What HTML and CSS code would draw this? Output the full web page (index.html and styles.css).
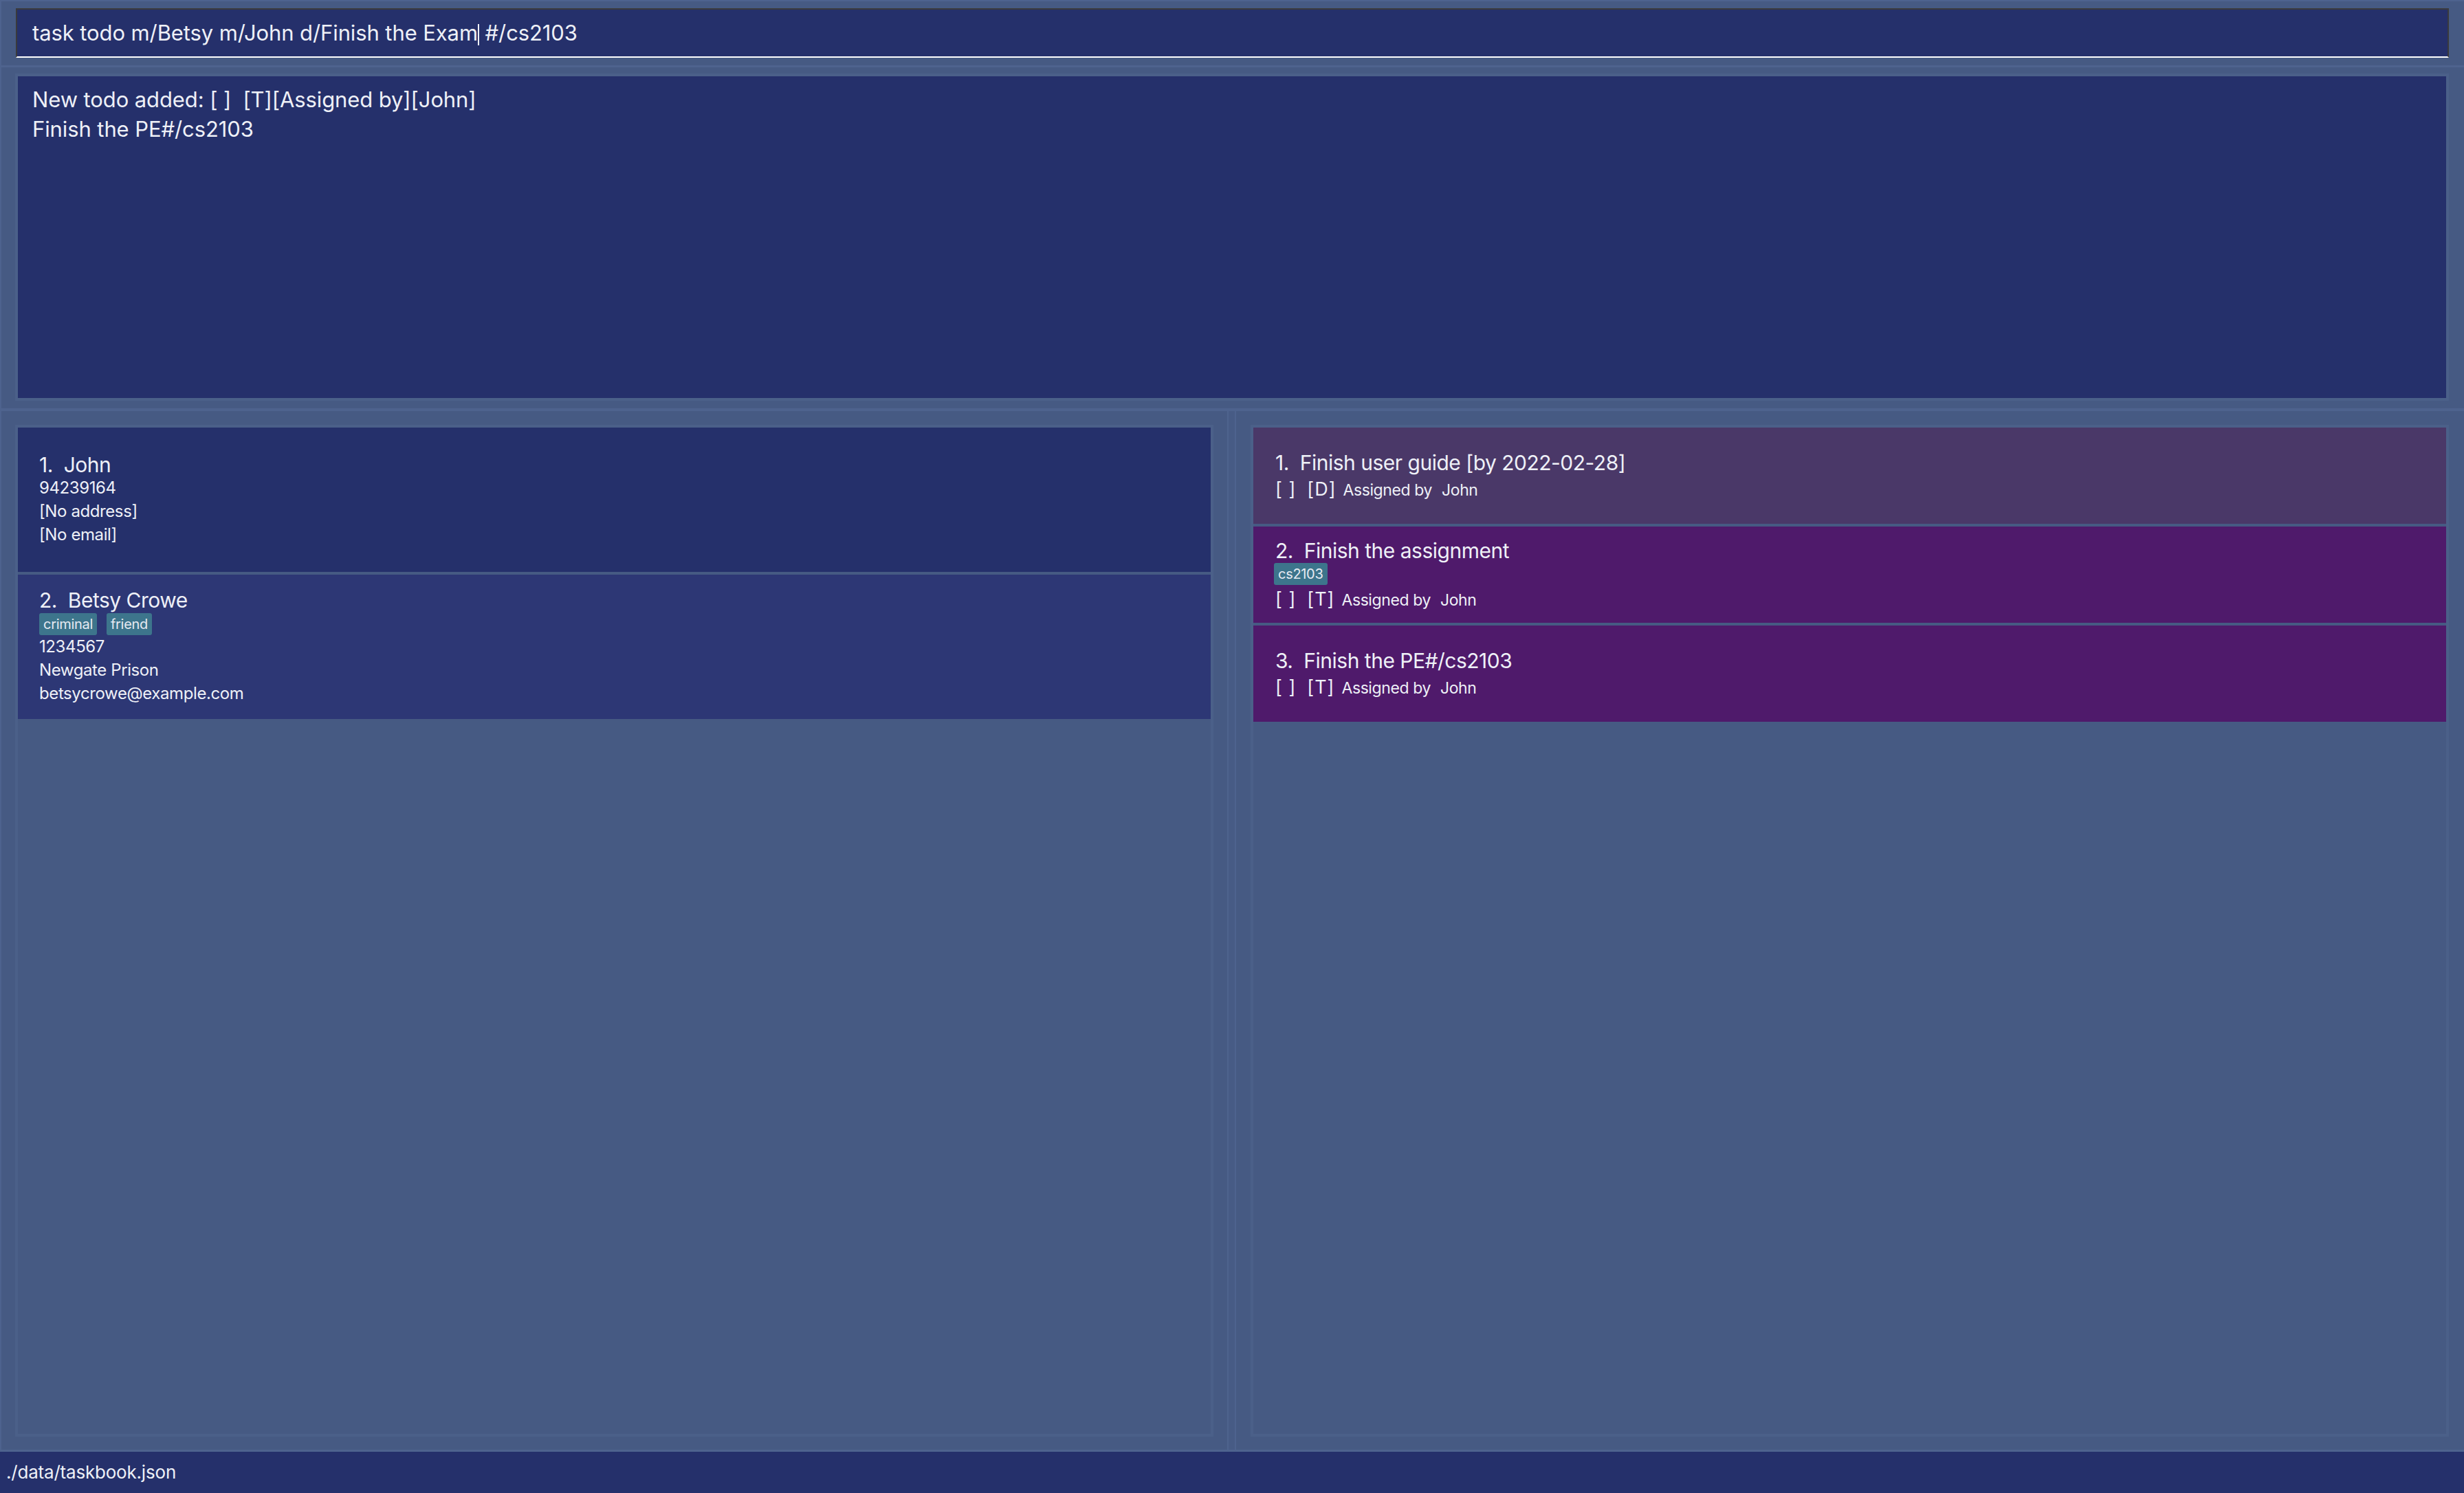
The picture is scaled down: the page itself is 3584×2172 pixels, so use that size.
FILE: index.html
```html
<!DOCTYPE html>
<html lang="en">
<head>
<meta charset="utf-8">
<title>TaskBook</title>
<link rel="stylesheet" href="styles.css">
</head>
<body>
<div class="app">
  <section class="cmd-section">
    <div class="cmd-box"><span class="cmd-text">task todo m/Betsy m/John d/Finish the Exam</span><span class="caret"></span><span class="cmd-text"> #/cs2103</span></div>
  </section>

  <section class="result-section">
    <div class="result-box">
      <div class="result-line">New todo added: [ ]  [T][Assigned by][John]</div>
      <div class="result-line">Finish the PE#/cs2103</div>
    </div>
  </section>

  <section class="lists">
    <div class="panel panel-left">
      <div class="list-box">
        <div class="person-card">
          <div class="name">1.  John</div>
          <div class="detail">94239164</div>
          <div class="detail">[No address]</div>
          <div class="detail">[No email]</div>
        </div>
        <div class="person-card alt">
          <div class="name">2.  Betsy Crowe</div>
          <div class="tags"><span class="tag">criminal</span><span class="tag">friend</span></div>
          <div class="detail">1234567</div>
          <div class="detail">Newgate Prison</div>
          <div class="detail">betsycrowe@example.com</div>
        </div>
      </div>
    </div>
    <div class="divider"></div>
    <div class="panel panel-right">
      <div class="list-box">
        <div class="task-card deadline">
          <div class="task-title">1.  Finish user guide [by 2022-02-28]</div>
          <div class="task-row"><span class="mark">[ ]</span><span class="mark type">[D]</span><span class="assigned">Assigned by</span><span class="assignee">John</span></div>
        </div>
        <div class="task-card todo">
          <div class="task-title">2.  Finish the assignment</div>
          <div class="tags"><span class="tag">cs2103</span></div>
          <div class="task-row"><span class="mark">[ ]</span><span class="mark type">[T]</span><span class="assigned">Assigned by</span><span class="assignee">John</span></div>
        </div>
        <div class="task-card todo">
          <div class="task-title">3.  Finish the PE#/cs2103</div>
          <div class="task-row"><span class="mark">[ ]</span><span class="mark type">[T]</span><span class="assigned">Assigned by</span><span class="assignee">John</span></div>
        </div>
      </div>
    </div>
  </section>

  <footer class="status-bar">./data/taskbook.json</footer>
</div>
</body>
</html>
```

FILE: styles.css
```css
* { box-sizing: border-box; }

html, body {
  margin: 0;
  padding: 0;
}

body {
  width: 3584px;
  height: 2172px;
  background: #465a83;
  color: #eef0f7;
  font-family: Inter, "Noto Sans", "Liberation Sans", sans-serif;
  overflow: hidden;
}

.app {
  display: flex;
  flex-direction: column;
  height: 2172px;
  overflow: hidden;
}

/* command box */
.cmd-section {
  height: 95px;
  flex: none;
  border-top: 2px solid #4e638e;
  border-left: 2px solid #4e638e;
  padding: 10px 22px 0 21px;
}

.cmd-box {
  height: 72px;
  background: #25306b;
  border-top: 2px solid #3a3a3c;
  border-left: 2px solid #3a3a3c;
  border-right: 2px solid #3a3a3c;
  border-bottom: 2px solid #ffffff;
  padding-left: 22px;
  font-size: 31px;
  line-height: 68px;
  letter-spacing: -0.1px;
  overflow: hidden;
}

.cmd-text {
  white-space: pre;
}

.caret {
  display: inline-block;
  width: 2px;
  height: 31px;
  background: #eef0f7;
  vertical-align: -7px;
}

/* result display */
.result-section {
  flex: none;
  border-top: 3px solid #4e638e;
  border-left: 2px solid #4e638e;
  padding: 9px 22px 11px 20px;
}

.result-box {
  height: 476px;
  background: #25306b;
  border: 4px solid #4b6089;
  padding: 12px 21px;
  font-size: 31px;
  line-height: 43px;
  letter-spacing: -0.1px;
}

.result-line {
  white-space: pre;
}

/* lists */
.lists {
  flex: 1;
  display: flex;
  border-top: 4px solid #4e638e;
  border-bottom: 3px solid #4e638e;
  min-height: 0;
}

.panel {
  flex: 1;
  display: flex;
  flex-direction: column;
  padding-top: 20px;
  padding-bottom: 19px;
}

.panel-left {
  border-left: 2px solid #4e638e;
  border-right: 2px solid #4e638e;
  padding-left: 20px;
  padding-right: 20px;
}

.panel-right {
  border-left: 2px solid #4e638e;
  padding-left: 21px;
  padding-right: 22px;
}

.divider {
  width: 9px;
  flex: none;
  background: #475b85;
}

.list-box {
  flex: 1;
  border: 4px solid #4b6089;
  display: flex;
  flex-direction: column;
  gap: 4px;
}

/* person cards */
.person-card {
  height: 210px;
  flex: none;
  background: #25306b;
  display: flex;
  flex-direction: column;
  justify-content: center;
  padding: 0 31px;
}

.person-card.alt {
  background: #2d3775;
}

.name {
  font-size: 30px;
  line-height: 34px;
  white-space: pre;
  letter-spacing: -0.5px;
}

.detail {
  font-size: 24px;
  line-height: 34px;
  letter-spacing: -0.4px;
}

.tags {
  display: flex;
  gap: 14px;
  margin-top: 2px;
}

.tag {
  height: 32px;
  line-height: 32px;
  padding: 0 6px;
  background: #3d758c;
  border-radius: 3px;
  font-size: 20px;
  color: #e6eaf2;
  letter-spacing: -0.3px;
}

/* task cards */
.task-card {
  height: 140px;
  flex: none;
  display: flex;
  flex-direction: column;
  justify-content: center;
  padding: 0 32px;
}

.task-card.deadline { background: #4a3868; }
.task-card.todo { background: #4f1a6b; }

.task-card .tags {
  margin-top: 0;
  margin-left: -2px;
}

.task-title {
  font-size: 30px;
  line-height: 36px;
  white-space: pre;
  letter-spacing: -0.5px;
}

.task-row {
  margin-top: 3px;
  height: 36px;
  line-height: 36px;
  display: flex;
  align-items: baseline;
  white-space: pre;
}

.mark {
  font-size: 27px;
  letter-spacing: 1px;
}

.mark.type {
  margin-left: 16px;
}

.assigned {
  font-size: 23px;
  margin-left: 10px;
  letter-spacing: -0.4px;
}

.assignee {
  font-size: 23px;
  margin-left: 14px;
  letter-spacing: -0.4px;
}

/* status bar */
.status-bar {
  height: 60px;
  flex: none;
  background: #25306b;
  font-size: 26px;
  line-height: 60px;
  padding-left: 9px;
  letter-spacing: -0.2px;
}
```
